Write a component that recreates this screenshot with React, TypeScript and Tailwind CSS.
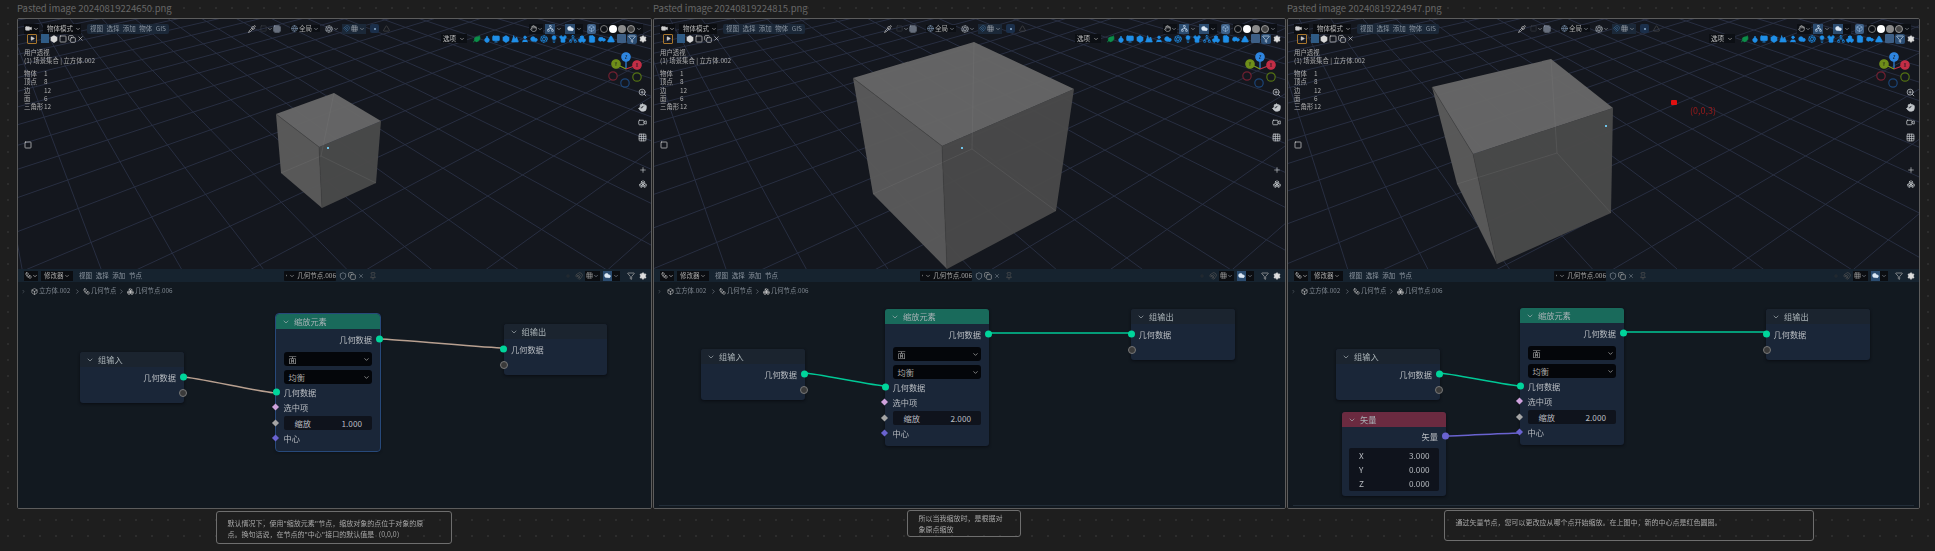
import type { ReactNode } from 'react';
import {
  Aperture, Box, Boxes, Car, ChevronDown, ChevronRight, Cloud, Copy, Droplet, File, Funnel, Globe, Grid3x3,
  Hand, Leaf, Lightbulb, Magnet, Monitor, Mountain, Network, Pin, Pipette, Play, Plus, Settings, Shield,
  Shirt, Square, Triangle, User, Video, Workflow, X, ZoomIn,
} from 'lucide-react';

type Pt = [number, number];

const VP1: Pt = [1109, -211];
const VP2: Pt = [-70, -158];

function gridLines(o: Pt) {
  const a = 0.054;
  const b = 0.085;
  const pt = (u: number, v: number): Pt => {
    const w = 1 + u * a + v * b;
    return [(u * a * VP1[0] + v * b * VP2[0] + o[0]) / w, (u * a * VP1[1] + v * b * VP2[1] + o[1]) / w];
  };
  const out: [Pt, Pt][] = [];
  for (let c = -34; c <= 34; c++) {
    const vMin = Math.max(-34, (-0.88 - c * a) / b);
    if (vMin < 34) out.push([pt(c, vMin), pt(c, 34)]);
    const uMin = Math.max(-34, (-0.88 - c * b) / a);
    if (uMin < 34) out.push([pt(uMin, c), pt(34, c)]);
  }
  return out;
}

const poly = (pts: Pt[]) => pts.map((p) => p.join(',')).join(' ');

function Scene({ origin, cube, dot }: { origin: Pt; cube: Pt[]; dot: Pt }) {
  // cube order: back, right, front, left (top ring), then the same for the bottom ring
  const [bt, rt, ft, lt, bb, rb, fb, lb] = cube;
  return (
    <svg className="absolute inset-0" width="100%" height="100%">
      {gridLines(origin).map(([p, q], i) => (
        <line key={i} x1={p[0]} y1={p[1]} x2={q[0]} y2={q[1]} stroke="#2a3145" strokeWidth="0.9" />
      ))}
      <g opacity="0.96">
        <polygon points={poly([lt, ft, fb, lb])} fill="#5b5b5b" />
        <polygon points={poly([ft, rt, rb, fb])} fill="#4a4a4a" />
        <polygon points={poly([bt, rt, ft, lt])} fill="#686868" />
      </g>
      <g stroke="#808080" strokeOpacity="0.3" strokeWidth="0.7" fill="none">
        <line x1={bt[0]} y1={bt[1]} x2={bb[0]} y2={bb[1]} />
        <line x1={lb[0]} y1={lb[1]} x2={bb[0]} y2={bb[1]} />
        <line x1={rb[0]} y1={rb[1]} x2={bb[0]} y2={bb[1]} />
      </g>
      <g stroke="#424242" strokeWidth="0.6" fill="none">
        <line x1={lt[0]} y1={lt[1]} x2={ft[0]} y2={ft[1]} />
        <line x1={ft[0]} y1={ft[1]} x2={fb[0]} y2={fb[1]} />
      </g>
      <rect x={dot[0] - 1} y={dot[1] - 1} width="2" height="2" fill="#6fc3e8" />
    </svg>
  );
}

function Gizmo() {
  const balls: [number, number, string, string, number][] = [
    [9, 27, '#7a2233', '', 0.9],
    [33, 28, '#5c7d12', '', 0.9],
    [21, 34, '#1d4a80', '', 0.9],
    [12, 15, '#6f8f1a', 'Y', 1],
    [33, 16, '#c42e46', 'X', 1],
    [22, 8, '#2f86e0', 'Z', 1],
  ];
  return (
    <svg width="44" height="42" className="absolute right-[3px] top-[30px]">
      <line x1="22" y1="20" x2="22" y2="8" stroke="#2f86e0" strokeWidth="1.2" />
      <line x1="22" y1="20" x2="33" y2="16" stroke="#c42e46" strokeWidth="1.2" />
      <line x1="22" y1="20" x2="12" y2="15" stroke="#7d9c1e" strokeWidth="1.2" />
      {balls.map(([x, y, c, t, o]) => (
        <g key={c}>
          <circle cx={x} cy={y} r="4.2" fill={t ? c : '#14171f'} stroke={c} strokeWidth="1.2" opacity={o} />
          {t && (
            <text x={x} y={y + 1.6} fontSize="4.5" textAnchor="middle" fill="#10131a">
              {t}
            </text>
          )}
        </g>
      ))}
    </svg>
  );
}

const Drop = ({ className = '' }: { className?: string }) => <ChevronDown size={6} strokeWidth={2.5} className={`shrink-0 ${className}`} />;

function ViewportBars() {
  const strip = [Droplet, Monitor, Box, Mountain, User, Cloud, Aperture, Lightbulb, Shirt, Network, Boxes, File, Car, Triangle];
  return (
    <div className="relative text-[6.5px] leading-none text-[#9aa0a8]">
      <div className="mt-[2px] flex h-[12px] items-center pl-[6px] pr-[8px] pt-[3px]">
        <div className="flex h-[10px] w-[15px] items-center justify-center gap-[1px] bg-[#0b0d11] text-[#d0d0d0]">
          <Video size={7} fill="currentColor" />
          <Drop />
        </div>
        <div className="ml-[4px] flex h-[10px] w-[38px] items-center gap-[2px] bg-[#0b0d11] pl-[2px] text-[#b5b5b5]">
          <Box size={7} />
          <span className="whitespace-nowrap">物体模式</span>
          <Drop />
        </div>
        <div className="ml-[6px] flex h-[10px] w-[82px] items-center justify-between rounded-[2px] bg-[#1b2838] px-[3px] text-[#8a94a0]">
          <span>视图</span>
          <span>选择</span>
          <span>添加</span>
          <span>物体</span>
          <span>GIS</span>
        </div>
        <div className="ml-[79px] flex items-center">
          <Pipette size={8} className="text-[#cfcfcf]" />
          <Square size={7} className="ml-[4px] text-[#3c3f46]" />
          <Drop />
          <Grid3x3 size={8} className="text-[#a9b6c8]" />
          <div className="ml-[9px] flex items-center gap-[1px] bg-[#0c0f14] px-[1px]">
            <Globe size={7} className="text-[#7f98b4]" />
            <span className="text-[#a8a8a8]">全局</span>
            <Drop />
          </div>
          <div className="ml-[5px] flex items-center">
            <Aperture size={8} />
            <Drop />
          </div>
          <div className="ml-[3px] flex h-[10px] items-center gap-[1px] bg-[#1b2838] px-[1px]">
            <Magnet size={7} className="text-[#3d6a94]" />
            <Grid3x3 size={7} />
            <Drop />
          </div>
          <div className="ml-[4px] flex h-[9px] w-[9px] items-center justify-center rounded-[2px] bg-[#1b2f4a]">
            <span className="h-[2px] w-[2px] rounded-full bg-[#8fb0d0]" />
          </div>
          <Triangle size={7} className="ml-[4px] text-[#555]" />
        </div>
        <div className="ml-auto flex items-center">
          <div className="flex h-[10px] w-[14px] items-center justify-center bg-[#0c0f14]">
            <Hand size={7} className="text-[#cccccc]" />
            <Drop />
          </div>
          <div className="ml-[2px] flex h-[10px] items-center gap-[1px]">
            <span className="flex h-[10px] w-[10px] items-center justify-center bg-[#2b4c70] text-[#c8dbef]">
              <Network size={7} />
            </span>
            <Drop />
          </div>
          <div className="ml-[3px] flex h-[10px] items-center gap-[1px] bg-[#0c0f14] pr-[1px]">
            <span className="flex h-[10px] w-[10px] items-center justify-center bg-[#2b4c70] text-[#dce8f5]">
              <Cloud size={7} fill="currentColor" />
            </span>
            <Drop />
          </div>
          <span className="ml-[4px] flex h-[10px] w-[9px] items-center justify-center rounded-[2px] bg-[#3d5f86] text-[#9cc0e4]">
            <Box size={7} />
          </span>
          <div className="ml-[3px] flex items-center gap-[1px] bg-[#0c0f14] px-[1px] py-[1px]">
            <span className="h-[8px] w-[8px] rounded-full border border-[#777]" />
            <span className="h-[8px] w-[8px] rounded-full bg-white" />
            <span className="h-[8px] w-[8px] rounded-full bg-[#8a8a8a]" />
            <span className="h-[8px] w-[8px] rounded-full border border-[#999] bg-[#444]" />
            <Drop />
          </div>
        </div>
      </div>

      <div className="flex h-[11px] items-center pl-[9px] pr-[4px]">
        <span className="flex h-[10px] w-[10px] items-center justify-center rounded-[1px] border border-[#a8762c] text-[#cfcfcf]">
          <Play size={5} fill="currentColor" />
        </span>
        <div className="ml-[4px] flex items-center gap-[1px] text-[#d8d8d8]">
          <span className="h-[9px] w-[8px] bg-[#2f5b85]" />
          <Box size={8} fill="currentColor" />
          <Square size={8} />
          <Copy size={8} />
          <X size={7} />
        </div>
        <div className="ml-auto flex h-[9px] items-center gap-[1px] bg-[#0c0f14] px-[2px] text-[#c0c0c0]">
          <span>选项</span>
          <Drop className="ml-[2px]" />
        </div>
        <div className="ml-[6px] flex items-center gap-[1.6px] text-[#1f8fe8]">
          <Leaf size={8} className="text-[#0d8f4a]" fill="currentColor" />
          {strip.map((Icon, i) => (
            <Icon key={i} size={8} fill={i === 6 || i === 9 ? 'none' : 'currentColor'} />
          ))}
          <span className="h-[9px] w-[9px] rounded-[1px] bg-[#3d5f86]" />
          <span className="flex h-[10px] w-[10px] items-center justify-center rounded-[2px] bg-[#2c4e74] text-[#cfe0f0]">
            <Funnel size={8} />
          </span>
          <Settings size={8} className="text-[#e0e0e0]" fill="currentColor" />
        </div>
      </div>
    </div>
  );
}

function ViewportStats() {
  const stats = [
    ['物体', '1'],
    ['顶点', '8'],
    ['边', '12'],
    ['面', '6'],
    ['三角形', '12'],
  ];
  return (
    <div className="relative mt-[5px] pl-[6px] text-[6.4px] leading-[8.3px] text-[#adadad]">
      <div>用户透视</div>
      <div className="whitespace-nowrap">(1) 场景集合 | 立方体.002</div>
      <div className="mt-[4.5px]">
        {stats.map(([k, v]) => (
          <div key={k} className="grid grid-cols-[20px_1fr]">
            <span>{k}</span>
            <span>{v}</span>
          </div>
        ))}
      </div>
      <Square size={8} className="mt-[29px] text-[#ddd]" />
    </div>
  );
}

function NavIcons() {
  return (
    <div className="absolute right-[4px] top-[69px] flex flex-col items-center gap-[6px] text-[#c4c8cc]">
      <ZoomIn size={9} />
      <Hand size={9} fill="currentColor" />
      <Video size={9} />
      <Grid3x3 size={9} />
      <Plus size={8} className="mt-[18px]" />
      <Boxes size={8} />
    </div>
  );
}

function EditorHeader({ name }: { name: string }) {
  return (
    <div className="flex h-[13px] items-center bg-[#16232f] pl-[6px] pr-[4px] text-[6.5px] leading-none text-[#8b949e]">
      <div className="flex h-[10px] w-[14px] items-center justify-center bg-[#0b0d11] text-[#ccc]">
        <Workflow size={7} />
        <Drop />
      </div>
      <div className="ml-[3px] flex h-[10px] w-[32px] items-center justify-between bg-[#0b0d11] px-[3px] text-[#a8a8a8]">
        <span>修改器</span>
        <Drop />
      </div>
      <div className="ml-[6px] flex w-[63px] justify-between">
        <span>视图</span>
        <span>选择</span>
        <span>添加</span>
        <span>节点</span>
      </div>
      <div className="ml-[142px] flex h-[10px] w-[52px] items-center gap-[2px] rounded-[1px] bg-[#0b0d11] pl-[2px] text-[#a8a8a8]">
        <Boxes size={7} />
        <Drop />
        <span className="whitespace-nowrap">{name}</span>
      </div>
      <Shield size={8} className="ml-[3px]" />
      <Copy size={8} className="ml-[1px] text-[#aaa]" />
      <X size={6} className="ml-[2px]" />
      <Pin size={8} className="ml-[5px] text-[#555]" />
      <div className="ml-auto flex items-center">
        <Plus size={6} className="text-[#333]" />
        <Magnet size={8} className="ml-[4px] text-[#555]" />
        <span className="ml-[2px] flex h-[10px] items-center bg-[#0b0d11] px-[1px]">
          <Grid3x3 size={7} className="text-[#999]" />
          <Drop />
        </span>
        <span className="ml-[3px] flex h-[10px] items-center gap-[1px] bg-[#0b0d11] pr-[1px]">
          <span className="flex h-[10px] w-[9px] items-center justify-center bg-[#2b4c70] text-[#dce8f5]">
            <Cloud size={7} fill="currentColor" />
          </span>
          <Drop />
        </span>
        <Funnel size={8} className="ml-[7px] text-[#b0b0b0]" />
        <Settings size={8} className="ml-[4px] text-[#dedede]" fill="currentColor" />
      </div>
    </div>
  );
}

function Breadcrumb({ name }: { name: string }) {
  return (
    <div className="relative flex h-[19px] items-center pl-[3px] text-[6.3px] leading-none text-[#7f8790]">
      <ChevronRight size={5} />
      <Box size={7} className="ml-[5px] text-[#c9c9c9]" />
      <span className="ml-[1px] w-[31px] whitespace-nowrap">立方体.002</span>
      <ChevronRight size={7} className="ml-[4px]" />
      <Workflow size={7} className="ml-[2px] text-[#c9c9c9]" />
      <span className="ml-[1px] w-[25px] whitespace-nowrap">几何节点</span>
      <ChevronRight size={7} className="ml-[2px]" />
      <Boxes size={7} className="ml-[2px] text-[#c9c9c9]" />
      <span className="ml-[1px] whitespace-nowrap">{name}</span>
    </div>
  );
}

function Socket({ side, kind }: { side: 'l' | 'r'; kind: 'geo' | 'empty' | 'bool' | 'num' | 'vec' | 'vecDot' }) {
  const pos = side === 'l' ? '-left-[3.5px]' : '-right-[3.5px]';
  if (kind === 'geo') return <span className={`absolute top-1/2 h-[7px] w-[7px] -translate-y-1/2 rounded-full bg-[#00d59b] ${pos}`} />;
  if (kind === 'empty') return <span className={`absolute top-1/2 h-[8px] w-[8px] -translate-y-1/2 rounded-full border border-[#777] bg-[#3a3a3a] ${pos}`} />;
  if (kind === 'vecDot') return <span className={`absolute top-1/2 h-[7px] w-[7px] -translate-y-1/2 rounded-full bg-[#6a63d0] ${pos}`} />;
  const tone = kind === 'bool' ? 'bg-[#cfa2dc]' : kind === 'num' ? 'bg-[#a5a5a5]' : 'bg-[#6a63d0]';
  return <span className={`absolute top-1/2 h-[5px] w-[5px] -translate-y-1/2 rotate-45 ${tone} ${pos}`} />;
}

function NodeRow({ children, right, socket }: { children?: ReactNode; right?: boolean; socket: ReactNode }) {
  return (
    <div className={`relative flex h-[15.5px] items-center px-[7.5px] text-[8.2px] text-[#b9bdc2] ${right ? 'justify-end' : ''}`}>
      {children}
      {socket}
    </div>
  );
}

function NodeCard(props: { x: number; y: number; title: string; head: string; ring?: boolean; children: ReactNode }) {
  return (
    <div
      className={`absolute w-[103.5px] rounded-[3px] bg-[#1a2638] shadow-[0_1px_3px_#0a0d12] ${props.ring ? 'outline outline-[#27497a]' : ''}`}
      style={{ left: props.x, top: props.y }}
    >
      <div className={`flex h-[15px] items-center gap-[4px] rounded-t-[3px] pl-[6px] text-[8.2px] text-[#a9b2b6] ${props.head}`}>
        <ChevronDown size={8} />
        <span>{props.title}</span>
      </div>
      {props.children}
    </div>
  );
}

function GroupInput({ x, y }: { x: number; y: number }) {
  return (
    <NodeCard x={x} y={y} title="组输入" head="bg-[#1b242f]">
      <div className="py-[2.5px]">
        <NodeRow right socket={<Socket side="r" kind="geo" />}>几何数据</NodeRow>
        <NodeRow socket={<Socket side="r" kind="empty" />} />
      </div>
    </NodeCard>
  );
}

function GroupOutput({ x, y }: { x: number; y: number }) {
  return (
    <NodeCard x={x} y={y} title="组输出" head="bg-[#1b242f]">
      <div className="py-[2.5px]">
        <NodeRow socket={<Socket side="l" kind="geo" />}>几何数据</NodeRow>
        <NodeRow socket={<Socket side="l" kind="empty" />} />
      </div>
    </NodeCard>
  );
}

function Select({ label }: { label: string }) {
  return (
    <div className="mx-[7.5px] flex h-[14px] items-center justify-between rounded-[3px] bg-[#04060a] pl-[5px] pr-[2px] text-[8.2px] text-[#a8a8a8]">
      <span>{label}</span>
      <ChevronDown size={7} strokeWidth={2.5} />
    </div>
  );
}

function ScaleNode({ x, y, value, ring }: { x: number; y: number; value: string; ring?: boolean }) {
  return (
    <NodeCard x={x} y={y} title="缩放元素" head="bg-[#196a5b]" ring={ring}>
      <div className="pb-[5px] pt-[2.5px]">
        <NodeRow right socket={<Socket side="r" kind="geo" />}>几何数据</NodeRow>
        <div className="mt-[5px] flex flex-col gap-[4px]">
          <Select label="面" />
          <Select label="均衡" />
        </div>
        <NodeRow socket={<Socket side="l" kind="geo" />}>几何数据</NodeRow>
        <NodeRow socket={<Socket side="l" kind="bool" />}>选中项</NodeRow>
        <div className="relative flex h-[15.5px] items-center px-[7.5px]">
          <div className="flex h-[14px] w-full items-center justify-between rounded-[2px] bg-[#0f131c] pl-[11px] pr-[10px] text-[8.2px] text-[#b9bdc2]">
            <span>缩放</span>
            <span>{value}</span>
          </div>
          <Socket side="l" kind="num" />
        </div>
        <NodeRow socket={<Socket side="l" kind="vec" />}>中心</NodeRow>
      </div>
    </NodeCard>
  );
}

function VectorNode({ x, y }: { x: number; y: number }) {
  const rows = [
    ['X', '3.000'],
    ['Y', '0.000'],
    ['Z', '0.000'],
  ];
  return (
    <NodeCard x={x} y={y} title="矢量" head="bg-[#6b2a40]">
      <div className="pb-[5px] pt-[1.5px]">
        <NodeRow right socket={<Socket side="r" kind="vecDot" />}>矢量</NodeRow>
        <div className="mx-[7px] mt-[4px] rounded-[2px] bg-[#0f131c] py-[0.5px]">
          {rows.map(([k, v]) => (
            <div key={k} className="flex h-[14px] items-center justify-between pl-[10px] pr-[9px] text-[8.2px] text-[#b9bdc2]">
              <span>{k}</span>
              <span>{v}</span>
            </div>
          ))}
        </div>
      </div>
    </NodeCard>
  );
}

function Wires({ wires }: { wires: { a: Pt; b: Pt; color: string }[] }) {
  return (
    <svg className="absolute inset-0" width="100%" height="100%">
      {wires.map(({ a, b, color }, i) => {
        const h = (b[0] - a[0]) * 0.12;
        return (
          <path
            key={i}
            d={`M${a[0]} ${a[1]}C${a[0] + h} ${a[1]} ${b[0] - h} ${b[1]} ${b[0]} ${b[1]}`}
            fill="none"
            stroke={color}
            strokeWidth="1.6"
          />
        );
      })}
    </svg>
  );
}

function Callout({ text, className }: { text: string; className: string }) {
  return (
    <div className={`whitespace-pre-line rounded-[3px] border border-[#6e6e6e] pl-[10.5px] pt-[5.5px] text-[7px] leading-[11.4px] text-[#a8a8a8] blur-[0.25px] ${className}`}>
      {text}
    </div>
  );
}

function Column(props: {
  file: string;
  width: string;
  origin: Pt;
  cube: Pt[];
  dot: Pt;
  extra?: ReactNode;
  nodeName: string;
  scrollbar?: boolean;
  editor: ReactNode;
  callout: ReactNode;
}) {
  return (
    <div className={`flex shrink-0 flex-col ${props.width}`}>
      <div className="flex h-[18px] items-center pb-[1px] text-[9.5px] leading-none text-[#666666]">{props.file}</div>
      <div className="h-[491px] overflow-hidden rounded-[2px] border border-[#5c5c5c] blur-[0.4px]">
        <div className="relative h-[250px] overflow-hidden bg-[#14171e]">
          <Scene origin={props.origin} cube={props.cube} dot={props.dot} />
          {props.extra}
          <ViewportBars />
          <ViewportStats />
          <Gizmo />
          <NavIcons />
        </div>
        <div className="relative h-[239px] bg-[#121920]">
          <EditorHeader name={props.nodeName} />
          <Breadcrumb name={props.nodeName} />
          {props.editor}
          {props.scrollbar && <div className="absolute inset-x-[5px] bottom-[2px] h-[1px] bg-[#222d38]" />}
        </div>
      </div>
      {props.callout}
    </div>
  );
}

const GEO = '#00c896';

export default function App() {
  return (
    <div className="flex h-[551px] w-[1935px] gap-[1px] overflow-hidden bg-[#1e1e1e] bg-[radial-gradient(circle,#2d2d2d_0.8px,transparent_1px)] bg-[size:16px_16px] pl-[17px] [font-family:'Noto_Sans_CJK_SC','Liberation_Sans',sans-serif]">
      <Column
        file="Pasted image 20240819224650.png"
        width="w-[635px]"
        origin={[309, 162]}
        cube={[[316, 74], [363, 102], [301, 128], [258, 95], [303, 137], [358, 164], [304, 189], [263, 154]]}
        dot={[310, 129]}
        nodeName="几何节点.006"
        editor={
          <>
            <Wires
              wires={[
                { a: [165, 108], b: [258, 124], color: '#b8a090' },
                { a: [362, 70], b: [485.5, 79], color: '#b8a090' },
              ]}
            />
            <GroupInput x={62} y={83} />
            <ScaleNode x={258} y={45} value="1.000" ring />
            <GroupOutput x={485.5} y={55} />
          </>
        }
        callout={
          <Callout
            className="ml-[199px] mt-[2px] h-[33px] w-[236px]"
            text={'默认情况下，使用"缩放元素"节点，缩放对象的点位于对象的原\n点。换句话说，在节点的"中心"接口的默认值是（0,0,0）'}
          />
        }
      />
      <Column
        file="Pasted image 20240819224815.png"
        width="w-[633px]"
        origin={[300, 162]}
        cube={[[320, 23], [420, 70], [288, 127], [199, 59], [318, 130], [402, 192], [293, 250], [219, 175]]}
        dot={[308, 129]}
        nodeName="几何节点.006"
        scrollbar
        editor={
          <>
            <Wires
              wires={[
                { a: [150.5, 104], b: [231, 117], color: GEO },
                { a: [334.5, 64], b: [477, 64], color: GEO },
              ]}
            />
            <GroupInput x={47} y={80} />
            <ScaleNode x={231} y={40} value="2.000" />
            <GroupOutput x={477} y={40} />
          </>
        }
        callout={<Callout className="ml-[254px] mt-[1px] h-[27px] w-[114px] !pt-[2px]" text={'所以当我缩放时，是根据对\n象原点缩放'} />}
      />
      <Column
        file="Pasted image 20240819224947.png"
        width="w-[633px]"
        origin={[290, 162]}
        cube={[[263, 40], [325, 89], [185, 135], [144, 68], [269, 134], [323, 194], [209, 245], [169, 165]]}
        dot={[318, 107]}
        nodeName="几何节点.006"
        scrollbar
        extra={
          <>
            <span className="absolute left-[383px] top-[81px] h-[5px] w-[6px] rounded-[1px] bg-[#e01010]" />
            <span className="absolute left-[402px] top-[87px] text-[9px] leading-[10px] text-[#9c1a1a]">(0,0,3)</span>
          </>
        }
        editor={
          <>
            <Wires
              wires={[
                { a: [151, 104], b: [232, 117], color: GEO },
                { a: [336, 63], b: [478, 63], color: GEO },
                { a: [157.5, 167], b: [232, 164], color: '#6a63d0' },
              ]}
            />
            <GroupInput x={48} y={80} />
            <ScaleNode x={232} y={39} value="2.000" />
            <GroupOutput x={478} y={40} />
            <VectorNode x={54} y={143} />
          </>
        }
        callout={
          <Callout
            className="ml-[157px] mt-[1px] h-[31px] w-[370px] !pt-[6px]"
            text="通过矢量节点，您可以更改应从哪个点开始缩放。在上图中，新的中心点是红色圆圈。"
          />
        }
      />
    </div>
  );
}
